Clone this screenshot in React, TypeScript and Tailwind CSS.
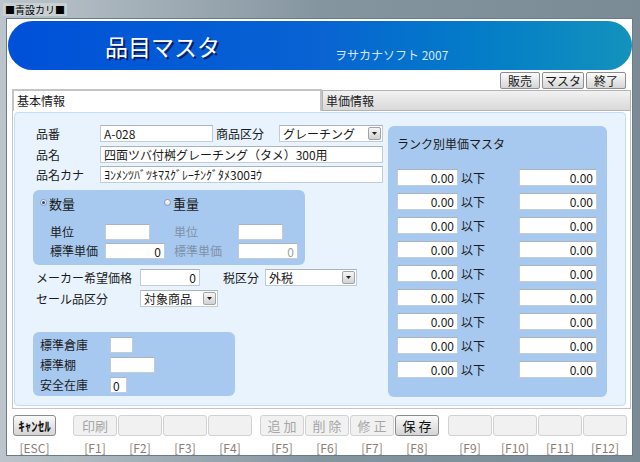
import { ReactNode } from 'react'

const font = "font-['Noto_Sans_CJK_JP','Noto_Sans',sans-serif]"

function Field({ className = '', value = '', right = false, dim = false }: { className?: string; value?: string; right?: boolean; dim?: boolean }) {
  return (
    <div
      className={`h-[17px] bg-white border border-[#c2ccd6] border-t-[#aab4be] text-[12px] leading-[15px] px-[3px] whitespace-nowrap overflow-hidden ${right ? 'text-right' : ''} ${dim ? 'text-[#a0a0a0]' : 'text-[#1a1a1a]'} ${className}`}
    >
      {value}
    </div>
  )
}

function Combo({ className = '', value }: { className?: string; value: string }) {
  return (
    <div className={`h-[17px] flex bg-white border border-[#c2ccd6] border-t-[#aab4be] ${className}`}>
      <span className="flex-1 px-[3px] text-[12px] leading-[15px] text-[#1a1a1a] whitespace-nowrap overflow-hidden">{value}</span>
      <span className="w-[13px] my-[1px] mr-[1px] flex items-center justify-center bg-linear-to-b from-[#f6f6f6] to-[#d2d2d2] border border-[#a4a4a4] rounded-[2px]">
        <svg width="5" height="3" viewBox="0 0 5 3">
          <path d="M0 0h5L2.5 3z" fill="#222" />
        </svg>
      </span>
    </div>
  )
}

function Radio({ on, label }: { on?: boolean; label: string }) {
  return (
    <div className="flex items-start gap-[2px]">
      <span className="mt-[3px] w-[7px] h-[7px] rounded-full border border-[#8d9bab] bg-linear-to-b from-white to-[#d8e0e8] flex items-center justify-center">
        {on && <span className="w-[3px] h-[3px] rounded-full bg-[#1c4a86]" />}
      </span>
      <span className="text-[13px] leading-[16px] text-[#1a1a1a]">{label}</span>
    </div>
  )
}

function Label({ children, className = '', dim = false }: { children: ReactNode; className?: string; dim?: boolean }) {
  return (
    <span className={`text-[12px] leading-[17px] whitespace-nowrap ${dim ? 'text-[#7f90a8]' : 'text-[#1a1a1a]'} ${className}`}>{children}</span>
  )
}

function TopButton({ children, w }: { children: ReactNode; w: string }) {
  return (
    <div className={`h-[17px] ${w} flex items-center justify-center bg-linear-to-b from-[#fbfbfb] to-[#d6d6d6] border border-[#8e8e8e] rounded-[2px] text-[12px] leading-[14px] text-[#1a1a1a]`}>
      {children}
    </div>
  )
}

function FKey({ text, label, state = 'off', w = 'w-[44px]', bold = false }: { text?: string; label: string; state?: 'off' | 'on'; w?: string; bold?: boolean }) {
  const btn =
    state === 'on'
      ? 'bg-linear-to-b from-[#fafafa] to-[#d4d4d4] border-[#8a8a8a] text-[#111]'
      : 'bg-[#f1f1f1] border-[#d2d2d2] text-[#a6a6a6]'
  return (
    <div className={`${w} flex flex-col items-center`}>
      <div className={`w-full h-[21px] border rounded-[3px] flex items-center justify-center text-[13px] leading-[15px] whitespace-nowrap ${btn} ${bold ? 'font-bold' : ''}`}>
        {text}
      </div>
      <span className="mt-[5px] text-[12px] leading-[14px] text-[#8b7d73]">{label}</span>
    </div>
  )
}

export default function App() {
  return (
    <div className={`w-[640px] h-[462px] flex flex-col bg-linear-to-r from-[#bcc5cb] via-[#8595a0] to-[#7a8b96] ${font}`}>
      {/* title bar */}
      <div className="h-[18px] flex items-center pl-[3px]">
        <span className="px-[2px] bg-[#c9d0d4] text-[10px] leading-[13px] text-black">■青設カリ■</span>
      </div>

      {/* client */}
      <div className="ml-[6px] w-[627px] h-[438px] bg-white border border-[#6b7b87] flex flex-col">
        {/* banner */}
        <div className="mt-[2px] ml-[1px] w-[624px] h-[49px] rounded-full bg-linear-to-r from-[#0050d8] via-[#0a63d2] to-[#1492bc] flex items-center pl-[97px]">
          <span className="text-[23px] leading-[28px] text-white [text-shadow:2px_2px_0_#0a1d6a]">品目マスタ</span>
          <span className="ml-[115px] mt-[18px] text-[12px] leading-[14px] text-[#d6e6fb]">ヲサカナソフト 2007</span>
        </div>

        {/* top buttons */}
        <div className="mt-[2px] h-[17px] flex justify-end gap-[2px] pr-[6px]">
          <TopButton w="w-[40px]">販売</TopButton>
          <TopButton w="w-[42px]">マスタ</TopButton>
          <TopButton w="w-[40px]">終了</TopButton>
        </div>

        {/* tabs */}
        <div className="h-[22px] flex pl-[5px]">
          <div className="w-[310px] h-full bg-white border-2 border-[#c4c4c4] border-b-0 pl-[3px] text-[12px] leading-[19px] text-[#1a1a1a]">基本情報</div>
          <div className="w-[309px] h-[21px] mt-[1px] bg-linear-to-b from-[#f2f2f2] to-[#d9d9d9] border border-[#b4b4b4] pl-[3px] text-[12px] leading-[19px] text-[#1a1a1a]">単価情報</div>
        </div>

        {/* tab page */}
        <div className="ml-[5px] w-[619px] h-[298px] border-x border-b border-[#c4c4c4] pl-[1px] pt-[1px]">
          <div className="w-[612px] h-[294px] rounded-[4px] bg-[#e8f3fd] border border-[#c6dcf1] flex pt-[12px] pl-[18px]">
            {/* left column */}
            <div className="w-[355px] flex flex-col">
              <div className="flex items-center">
                <Label className="w-[67px] pl-[3px]">品番</Label>
                <Field className="w-[113px]" value="A-028" />
                <Label className="w-[66px] pl-[3px]">商品区分</Label>
                <Combo className="w-[104px]" value="グレーチング" />
              </div>
              <div className="mt-[4px] flex items-center">
                <Label className="w-[67px] pl-[3px]">品名</Label>
                <Field className="w-[283px]" value="四面ツバ付桝グレーチング（タメ）300用" />
              </div>
              <div className="mt-[3px] flex items-center">
                <Label className="w-[67px] pl-[3px]">品名カナ</Label>
                <Field className="w-[283px]" value="ﾖﾝﾒﾝﾂﾊﾞﾂｷﾏｽｸﾞﾚｰﾁﾝｸﾞﾀﾒ300ﾖｳ" />
              </div>

              {/* 数量 / 重量 group */}
              <div className="mt-[7px] w-[272px] h-[75px] rounded-[6px] bg-[#a8c9ef] pt-[6px] pl-[7px] flex flex-col">
                <div className="flex h-[16px]">
                  <div className="w-[124px]">
                    <Radio on label="数量" />
                  </div>
                  <Radio label="重量" />
                </div>
                <div className="mt-[11px] flex items-center pl-[10px]">
                  <Label className="w-[55px]">単位</Label>
                  <Field className="w-[45px] !h-[16px]" />
                  <Label dim className="ml-[24px] w-[64px]">単位</Label>
                  <Field className="w-[45px] !h-[16px]" />
                </div>
                <div className="mt-[2px] flex items-center pl-[10px]">
                  <Label className="w-[55px]">標準単価</Label>
                  <Field className="w-[60px] !h-[16px]" value="0" right />
                  <Label dim className="ml-[9px] w-[64px]">標準単価</Label>
                  <Field className="w-[60px] !h-[16px]" value="0" right dim />
                </div>
              </div>

              <div className="mt-[4px] flex items-center">
                <Label className="w-[107px] pl-[3px]">メーカー希望価格</Label>
                <Field className="w-[60px]" value="0" right />
                <Label className="ml-[23px] w-[42px]">税区分</Label>
                <Combo className="w-[92px]" value="外税" />
              </div>
              <div className="mt-[4px] flex items-center">
                <Label className="w-[107px] pl-[3px]">セール品区分</Label>
                <Combo className="w-[78px]" value="対象商品" />
              </div>

              {/* 倉庫 group */}
              <div className="mt-[25px] w-[202px] h-[64px] rounded-[6px] bg-[#a8c9ef] pt-[4px] pl-[7px] flex flex-col">
                <div className="flex items-center">
                  <Label className="w-[70px]">標準倉庫</Label>
                  <Field className="w-[23px] !h-[16px]" />
                </div>
                <div className="mt-[3px] flex items-center">
                  <Label className="w-[70px]">標準棚</Label>
                  <Field className="w-[45px] !h-[16px]" />
                </div>
                <div className="mt-[3px] flex items-center">
                  <Label className="w-[70px]">安全在庫</Label>
                  <Field className="w-[17px] !h-[16px] !px-[2px]" value="0" />
                </div>
              </div>
            </div>

            {/* right column: rank prices */}
            <div className="mt-[1px] w-[219px] h-[271px] rounded-[6px] bg-[#a8c9ef] pl-[9px] pr-[10px] pt-[10px] flex flex-col">
              <span className="text-[12px] leading-[16px] text-[#1a1a1a]">ランク別単価マスタ</span>
              <div className="mt-[17px] flex flex-col gap-[7px]">
                {Array.from({ length: 9 }).map((_, i) => (
                  <div key={i} className="flex items-center">
                    <Field className="w-[61px]" value="0.00" right />
                    <Label className="ml-[3px]">以下</Label>
                    <Field className="ml-auto w-[78px]" value="0.00" right />
                  </div>
                ))}
              </div>
            </div>
          </div>
        </div>

        {/* function keys */}
        <div className="mt-[6px] flex pl-[6px]">
          <FKey w="w-[43px]" text="ｷｬﾝｾﾙ" label="[ESC]" state="on" bold />
          <div className="ml-[17px] flex gap-[1px]">
            <FKey text="印刷" label="[F1]" />
            <FKey label="[F2]" />
            <FKey label="[F3]" />
            <FKey label="[F4]" />
          </div>
          <div className="ml-[8px] flex gap-[1px]">
            <FKey text="追 加" label="[F5]" />
            <FKey text="削 除" label="[F6]" />
            <FKey text="修 正" label="[F7]" />
            <FKey text="保 存" label="[F8]" state="on" />
          </div>
          <div className="ml-[9px] flex gap-[1px]">
            <FKey label="[F9]" />
            <FKey label="[F10]" />
            <FKey label="[F11]" />
            <FKey label="[F12]" />
          </div>
        </div>
      </div>
    </div>
  )
}
